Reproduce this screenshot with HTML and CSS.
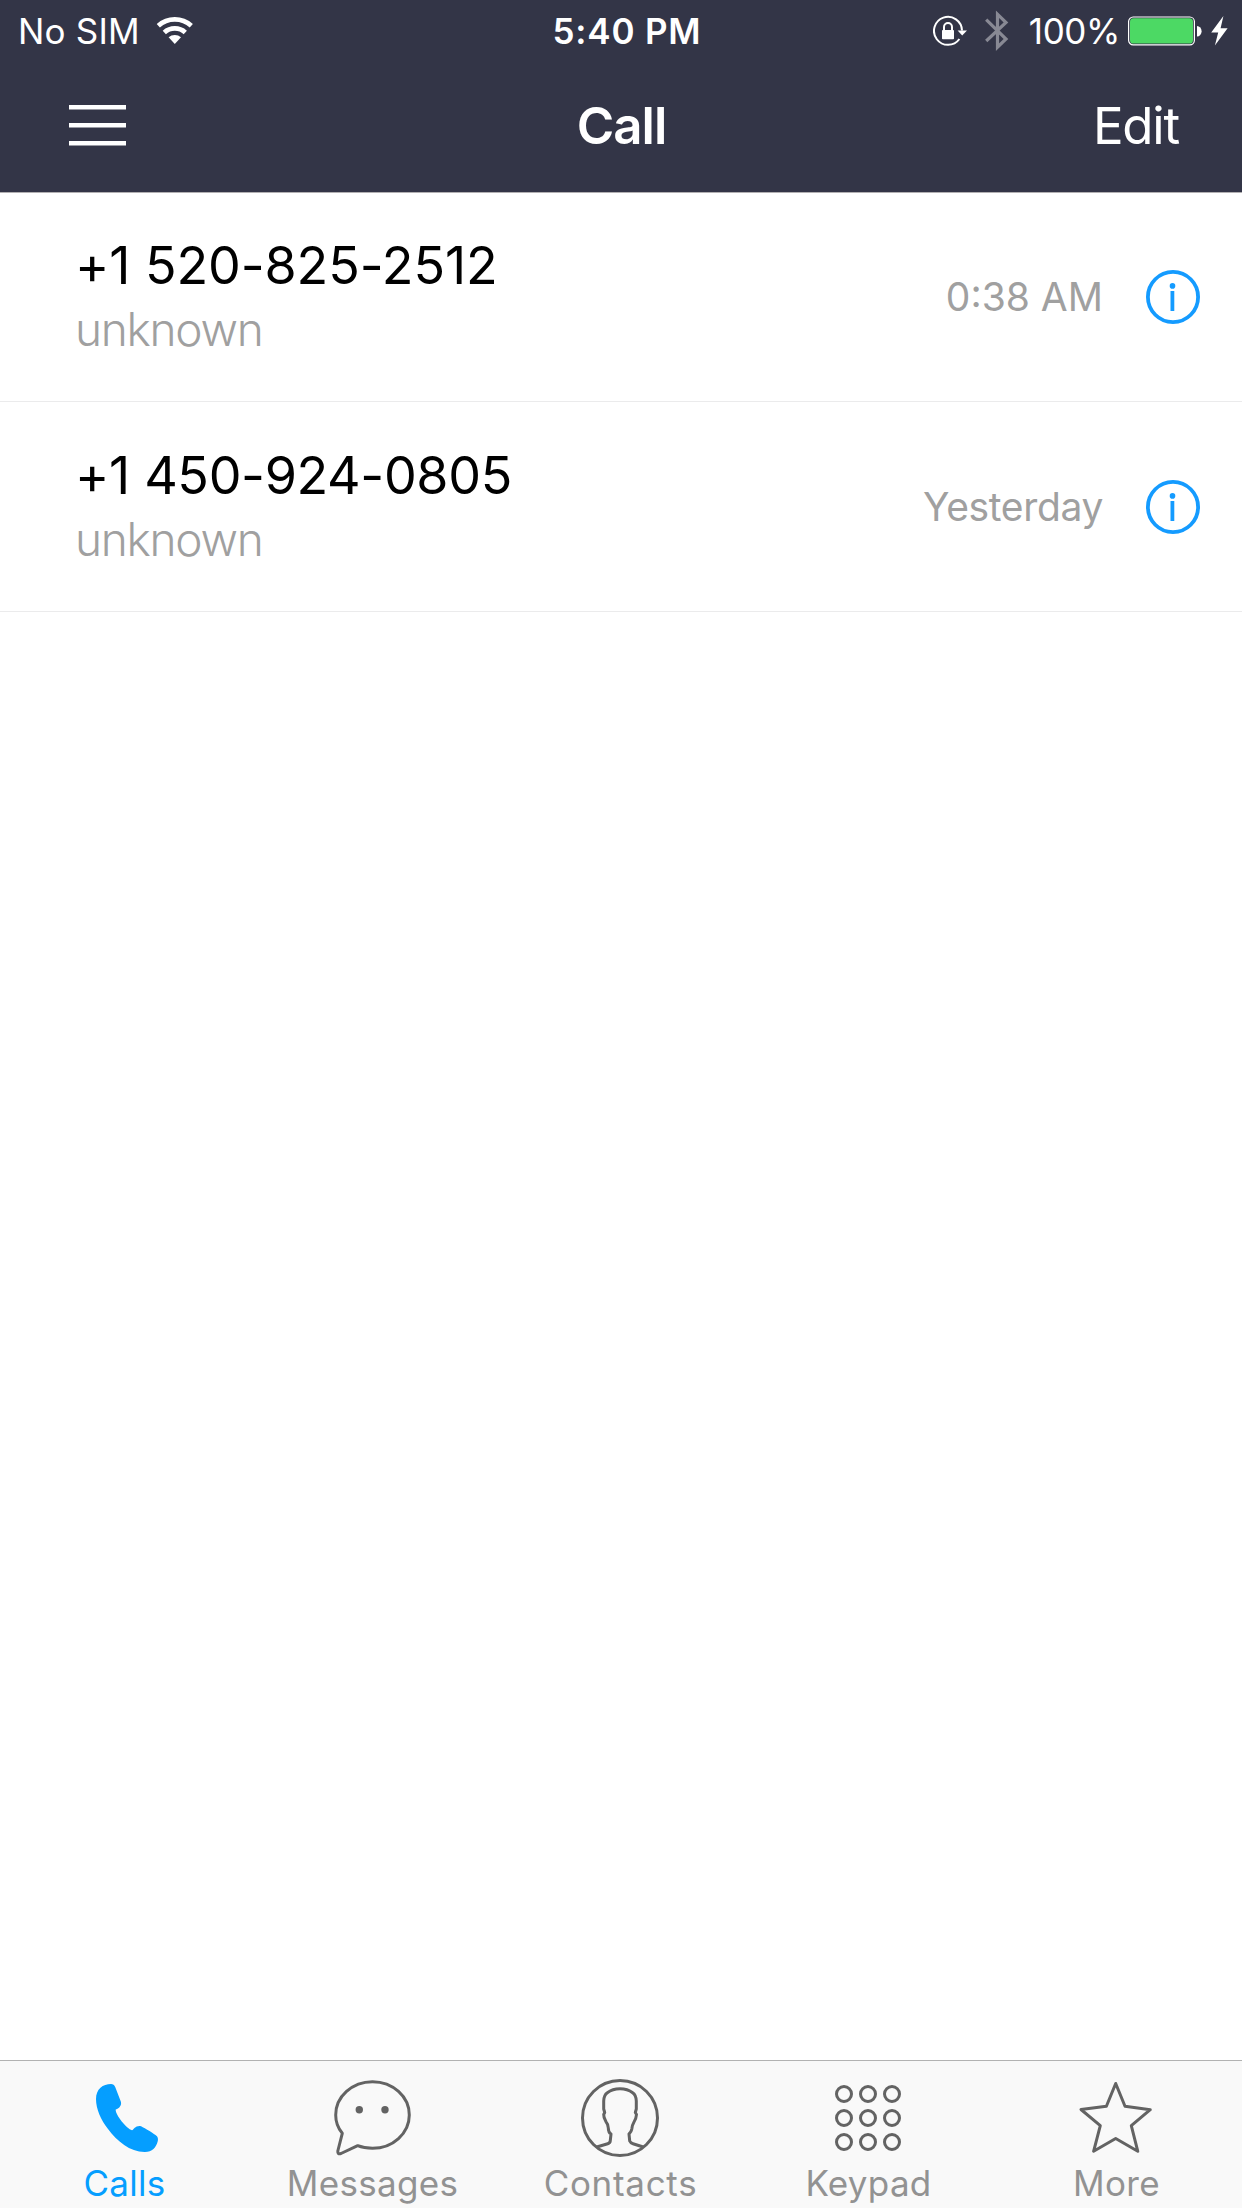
FILE: index.html
```
<!DOCTYPE html>
<html lang="en">
<head>
<meta charset="utf-8">
<title>Call</title>
<link rel="stylesheet" href="styles.css">
</head>
<body>
<div class="app">
  <header class="header">
    <div class="status">
      <div class="status-left">
        <span class="carrier">No SIM</span>
        <svg class="wifi" width="38" height="28" viewBox="0 0 38 28">
          <g fill="none" stroke="#fff" stroke-width="4.8">
            <path d="M2.3 9.7A24.8 24.8 0 0 1 35.3 9.7"/>
            <path d="M8.3 16.5A15.7 15.7 0 0 1 29.3 16.5"/>
          </g>
          <path fill="#fff" d="M18.8 28L12.6 21.3A9.2 9.2 0 0 1 25 21.3Z"/>
        </svg>
      </div>
      <span class="clock">5:40 PM</span>
      <div class="status-right">
        <svg class="lock" width="36" height="32" viewBox="0 0 36 32">
          <path fill="none" stroke="#fff" stroke-width="2" d="M29 15.5A14 14 0 1 0 26.4 24"/>
          <path fill="#fff" d="M24.6 15.5H34L29.2 20.6Z"/>
          <rect x="9" y="15" width="12" height="9.2" rx=".8" fill="#fff"/>
          <path fill="none" stroke="#fff" stroke-width="2" d="M11 15.5V12A4 4 0 0 1 19 12V15.5"/>
        </svg>
        <svg class="bluetooth" width="24" height="42" viewBox="0 0 24 42">
          <path fill="none" stroke="#888994" stroke-width="3.2" d="M1.2 9.7L21 29L12.5 37.2V4.2L21 12.5L1.2 31"/>
        </svg>
        <span class="percent">100%</span>
        <svg class="battery" width="74" height="30" viewBox="0 0 74 30">
          <rect x=".6" y="1" width="65.8" height="27.8" rx="4.6" fill="none" stroke="#fff" stroke-width="1.2"/>
          <rect x="2" y="2.3" width="63" height="25.2" rx="3.6" fill="#4cd964"/>
          <path fill="#fff" d="M69 10A4.6 5.2 0 0 1 69 20.4Z"/>
        </svg>
        <svg class="bolt" width="17" height="30" viewBox="0 0 17 30">
          <path fill="#fff" d="M12.4 0L.2 16.4H7.2L3.9 29.6L16.6 12.2H9.6Z"/>
        </svg>
      </div>
    </div>
    <nav class="nav">
      <svg class="menu" width="57" height="42" viewBox="0 0 57 42">
        <path fill="#fff" d="M0 0H57V4.6H0ZM0 18H57V22.6H0ZM0 36H57V40.6H0Z"/>
      </svg>
      <h1 class="title">Call</h1>
      <span class="edit">Edit</span>
    </nav>
  </header>

  <main class="calls">
    <article class="call">
      <div class="caller">
        <span class="number">+1 520-825-2512</span>
        <span class="label">unknown</span>
      </div>
      <span class="time">0:38 AM</span>
      <svg class="info" width="54" height="54" viewBox="0 0 54 54">
        <circle cx="27" cy="27" r="25.1"/>
        <path d="M26.4 21V41"/>
        <circle class="dot" cx="26.5" cy="15.9" r="2.8"/>
      </svg>
    </article>
    <article class="call">
      <div class="caller">
        <span class="number number-tight">+1 450-924-0805</span>
        <span class="label">unknown</span>
      </div>
      <span class="time time-word">Yesterday</span>
      <svg class="info" width="54" height="54" viewBox="0 0 54 54">
        <circle cx="27" cy="27" r="25.1"/>
        <path d="M26.4 21V41"/>
        <circle class="dot" cx="26.5" cy="15.9" r="2.8"/>
      </svg>
    </article>
  </main>

  <footer class="tabs">
    <div class="tab active">
      <svg width="96" height="90" viewBox="0 0 96 90">
        <path fill="#059eff" d="M20 27C20 17 27 12 35 12Q38 12 39.2 15L44.8 29.5C46 33 43.5 36.3 39.7 37.6C39.2 43 51 57 56 58.3C58 57.5 59 53.800 64 54C66 54.2 76 60.5 79.5 63C82 64.5 82.3 66.5 81.8 69C80 76 76 80.2 68.5 80C54 80 41 69 32 57C25 48 20 37 20 27Z"/>
      </svg>
      <span class="tab-label">Calls</span>
    </div>
    <div class="tab">
      <svg width="96" height="90" viewBox="0 0 96 90">
        <path class="line" d="M18.3 61.3C13.8 56 11.7 50 11.7 43C11.7 24.6 28.2 9.7 48.5 9.7S85.3 24.6 85.3 43S68.8 76.3 48.5 76.3C43 76.3 38 75.5 33.7 73.7L17 81.5Q13.4 82.7 13.8 79Z"/>
        <circle cx="35.3" cy="37.7" r="3.7" fill="#636363"/>
        <circle cx="61" cy="37.7" r="3.7" fill="#636363"/>
      </svg>
      <span class="tab-label">Messages</span>
    </div>
    <div class="tab contacts">
      <svg width="96" height="90" viewBox="0 0 96 90">
        <circle class="line" cx="48" cy="46" r="37.5"/>
        <path class="line" d="M24.7 75L35.7 71.7Q38.3 71 38.3 68.5L39 62Q36.3 60.5 36.3 56Q36 52 34 49.7Q31.5 45.5 31.7 42.5L32.7 40.5L31.7 37V29Q31.9 23 35.3 20.7Q40.5 16.7 48 16.7Q55.5 16.7 60.7 20.7Q64.1 23 64.3 29V37L63.3 40.5L64.5 42.5Q64.2 46.5 62 50Q60.2 53 59.8 57Q59.3 60 57 62L57.7 69Q58.5 71 61 71.7L71.3 75"/>
      </svg>
      <span class="tab-label">Contacts</span>
    </div>
    <div class="tab">
      <svg width="96" height="90" viewBox="0 0 96 90">
        <g class="line">
          <circle cx="24" cy="22" r="7.5"/><circle cx="48" cy="22" r="7.5"/><circle cx="72" cy="22" r="7.5"/>
          <circle cx="24" cy="46" r="7.5"/><circle cx="48" cy="46" r="7.5"/><circle cx="72" cy="46" r="7.5"/>
          <circle cx="24" cy="70" r="7.5"/><circle cx="48" cy="70" r="7.5"/><circle cx="72" cy="70" r="7.5"/>
        </g>
      </svg>
      <span class="tab-label">Keypad</span>
    </div>
    <div class="tab">
      <svg width="96" height="90" viewBox="0 0 96 90">
        <path class="line" d="M47.7 11.5L57 34.3L82.3 37.7L63.3 53.7L69.8 79.3L47.7 66.5L25.6 79.3L32.3 53.7L13 37.5L38.4 34.3Z"/>
      </svg>
      <span class="tab-label">More</span>
    </div>
  </footer>
</div>
</body>
</html>
```
FILE: styles.css
```
* { box-sizing: border-box; }

body {
  margin: 0;
  background: #fff;
  font-family: Inter, "Liberation Sans", sans-serif;
}

svg { display: block; flex: none; }

.app {
  display: flex;
  flex-direction: column;
  width: 1242px;
  height: 2208px;
}

/* Header */
.header {
  height: 192px;
  background: #333547;
  box-shadow: 0 1px 0 #b2b0b2;
  color: #fff;
}

.status {
  display: grid;
  grid-template-columns: 1fr auto 1fr;
  align-items: center;
  height: 62px;
  padding: 0 14px 0 18px;
  font-size: 35px;
  line-height: 42px;
}

.status-left,
.status-right { display: flex; align-items: center; }

.status-right { justify-content: flex-end; }

.carrier { letter-spacing: .2px; }
.wifi { margin: 0 0 3px 16px; }
.clock { font-weight: 600; letter-spacing: .8px; padding-left: 8px; }
.lock { margin-right: 16px; }
.bluetooth { margin-right: 20px; }
.percent { letter-spacing: -.4px; margin-right: 8px; }
.battery { margin-right: 9px; }

.nav {
  display: grid;
  grid-template-columns: 1fr auto 1fr;
  align-items: center;
  height: 130px;
  padding: 0 63px 2px 69px;
  font-size: 51px;
  line-height: 60px;
}

.title {
  margin: 0;
  padding-right: 5px;
  font-size: 51px;
  font-weight: 600;
  letter-spacing: -1px;
}

.edit { justify-self: end; letter-spacing: -1.2px; }

/* Call list */
.calls { flex: 1; }

.call {
  display: flex;
  align-items: center;
  height: 210px;
  padding: 0 42px 0 75px;
  border-bottom: 1px solid #ebebec;
}

.caller {
  display: flex;
  flex: 1;
  flex-direction: column;
  gap: 4px;
  margin-bottom: 2px;
}

.number {
  font-size: 52px;
  line-height: 63px;
  letter-spacing: -.1px;
  color: #000;
}

.number-tight { letter-spacing: -.35px; }

.label {
  font-size: 46px;
  font-weight: 300;
  line-height: 56px;
  letter-spacing: -1.3px;
  color: #a0a0a0;
}

.time { margin-right: 43px; font-size: 39px; line-height: 47px; color: #a0a0a0; }
.time-word { letter-spacing: -.35px; }

.info {
  fill: none;
  stroke: #149bff;
  stroke-width: 3.8px;
}

.info .dot { fill: #149bff; stroke: none; }

/* Tab bar */
.tabs {
  display: grid;
  grid-template-columns: repeat(5, 248px);
  height: 148px;
  padding-top: 11px;
  border-top: 1px solid #b2b2b2;
  background: #f9f9f9;
}

.tab {
  display: flex;
  flex-direction: column;
  align-items: center;
  color: #929292;
}

.tab.active { color: #059eff; }

.tab-label {
  padding-left: 1px;
  font-size: 35px;
  line-height: 42px;
  letter-spacing: .3px;
}

.contacts .tab-label { letter-spacing: .7px; }

.line { fill: none; stroke: #636363; stroke-width: 3px; stroke-linejoin: round; }
```
